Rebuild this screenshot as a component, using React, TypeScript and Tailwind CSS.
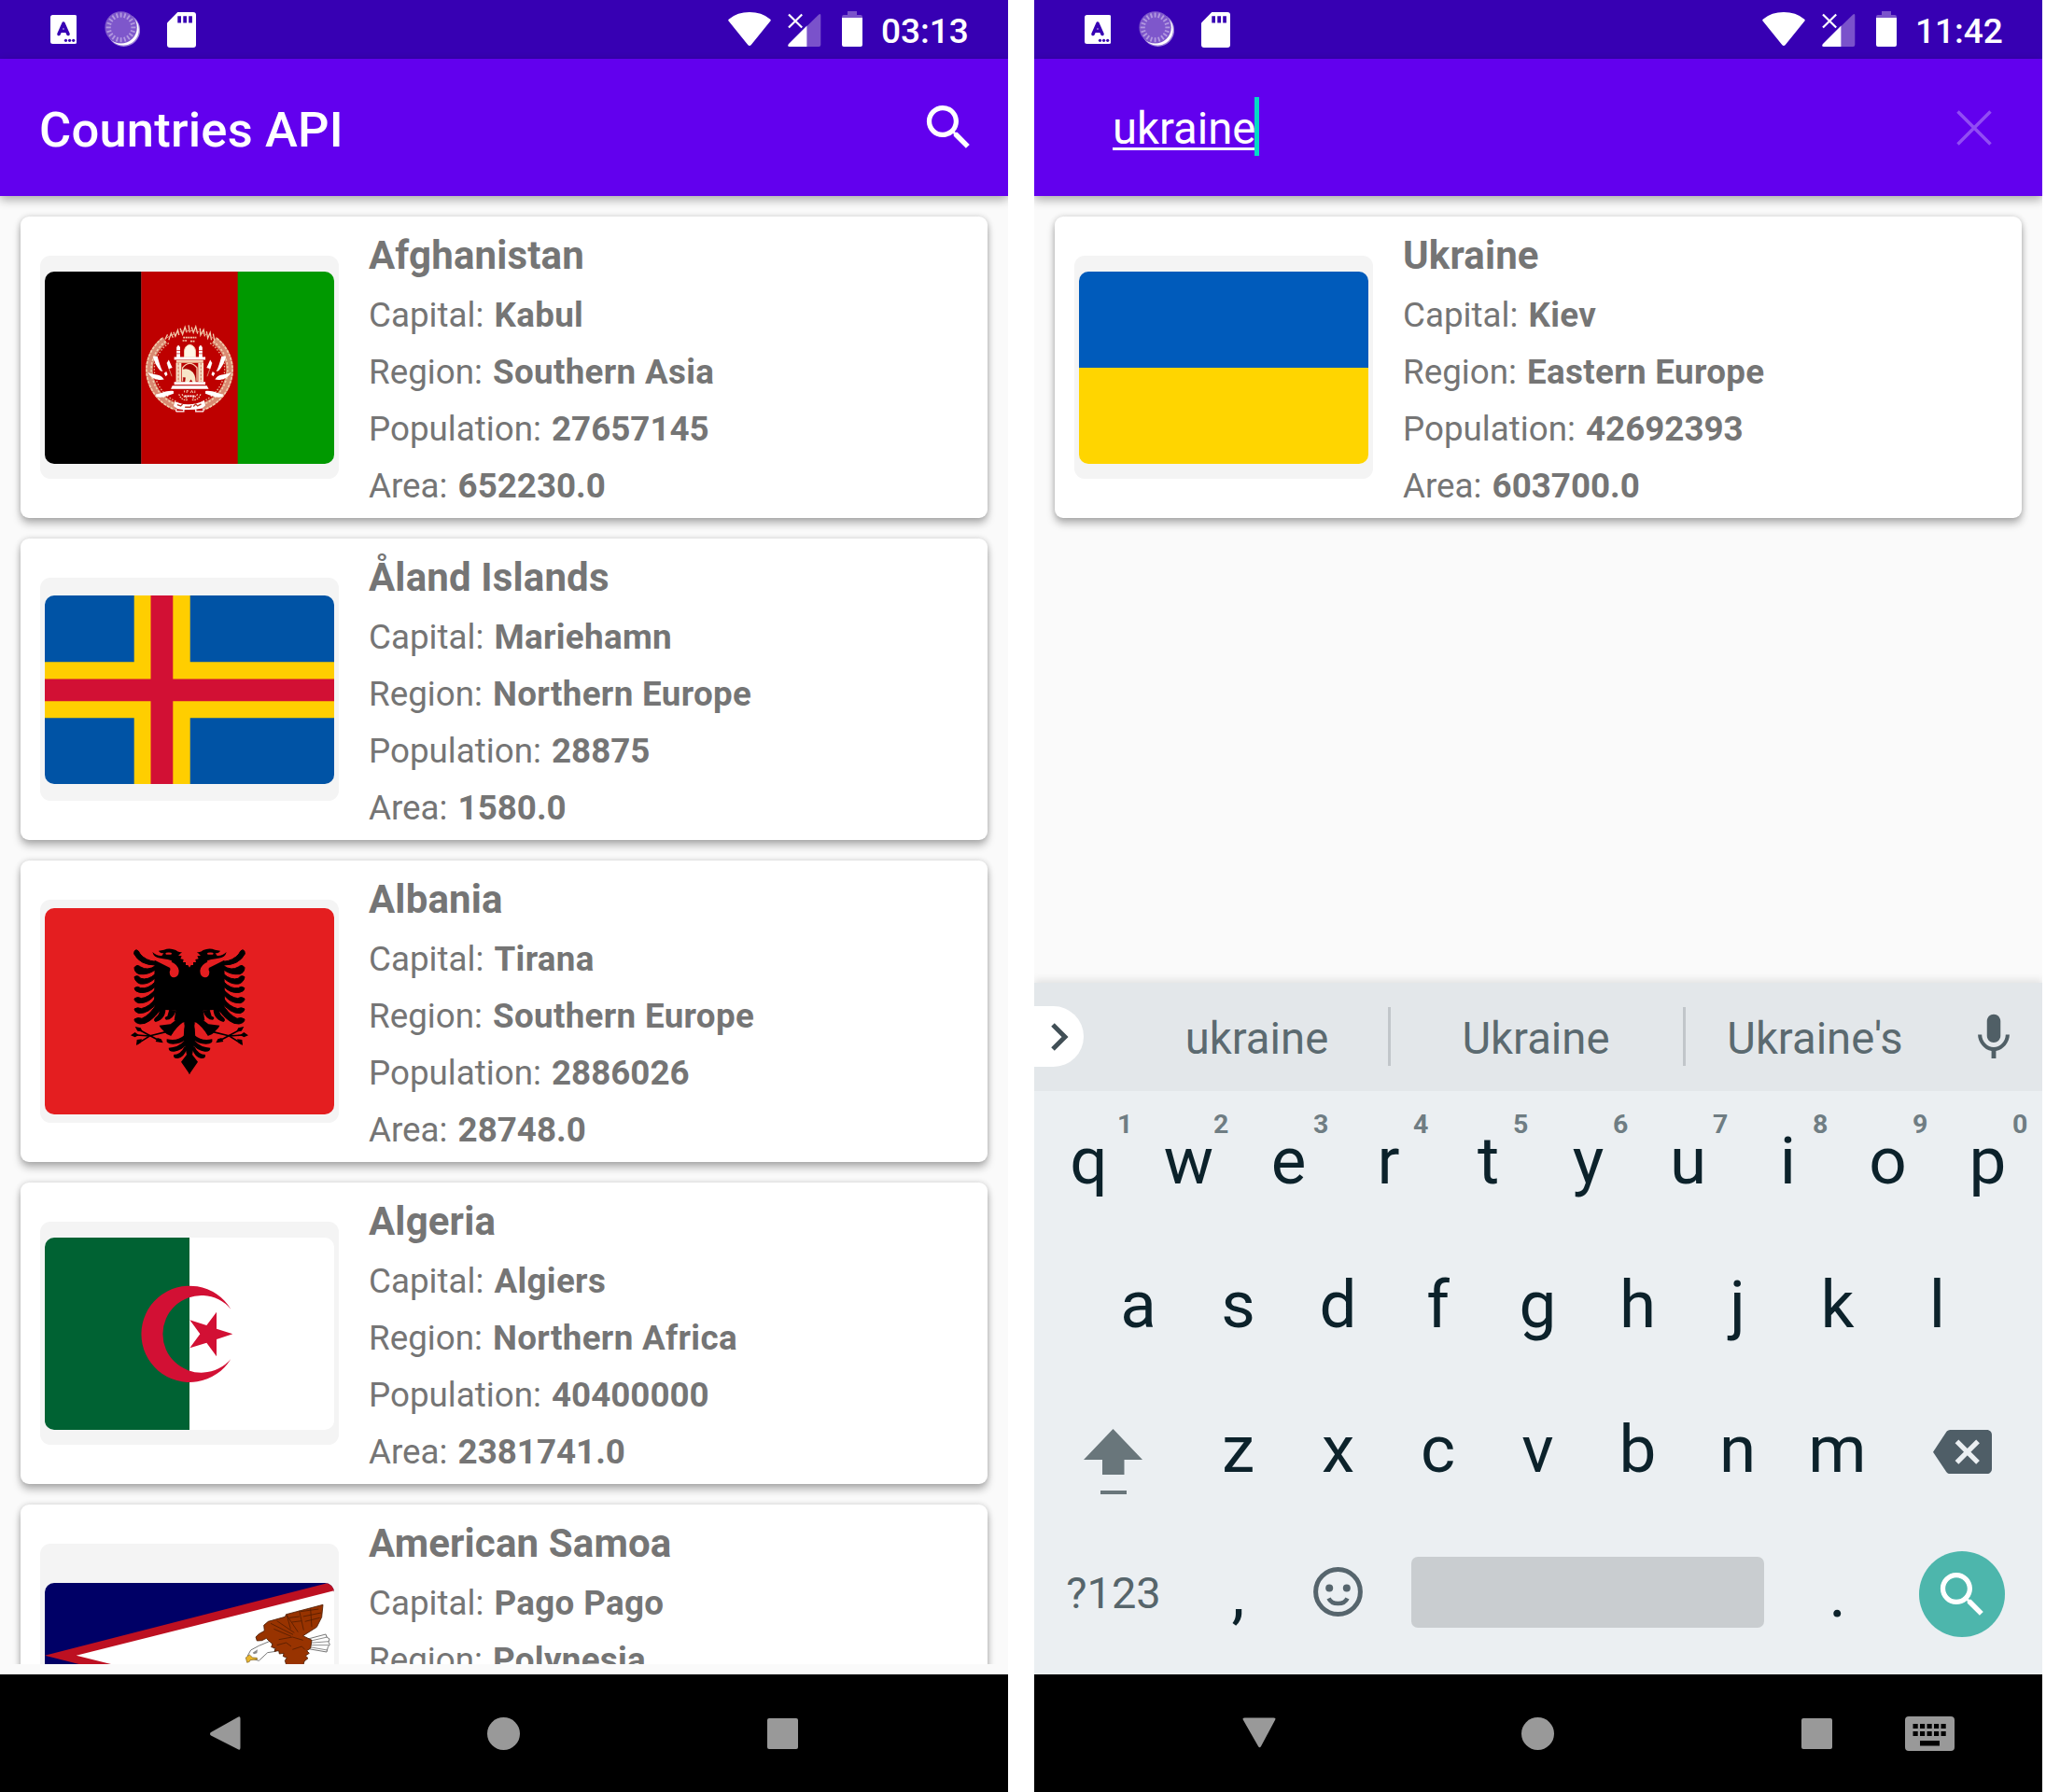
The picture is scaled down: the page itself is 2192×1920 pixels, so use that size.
import type { ReactNode } from "react";

/* ---------- flags ---------- */

function AfghanistanFlag() {
  const wreath = [-1, 1].map((s) => (
    <g key={s} transform={s === 1 ? "translate(438 0) scale(-1 1)" : undefined}>
      <path d="M137 132 C92 165 76 215 90 262 C102 302 132 334 174 348" fill="none" stroke="#d98a72" strokeWidth="24" />
      <path d="M128 126 C82 165 66 215 82 266 C94 306 126 342 170 358" fill="none" stroke="#f3cfae" strokeWidth="5" strokeDasharray="9 4" />
      <path d="M140 136 C98 168 84 215 96 258 C108 298 136 328 176 342" fill="none" stroke="#f3cfae" strokeWidth="5" strokeDasharray="7 5" />
      <path d="M150 142 C108 172 94 215 106 254 C116 290 142 318 180 334" fill="none" stroke="#e9b795" strokeWidth="4" strokeDasharray="5 5" />
      <path d="M97 186 C103 205 112 222 122 232 L130 234 C122 220 118 205 112 184 Z" fill="#fff" />
      <path d="M80 236 C96 246 114 240 128 252 L134 260 C116 264 90 258 80 236 Z" fill="#fff" />
      <path d="M106 308 C124 308 142 294 166 298 L166 306 C148 312 128 322 110 316 Z" fill="#fff" />
      <path d="M144 206 L160 250" stroke="#d98a72" strokeWidth="3" />
      <path d="M144 206 L150 196 L158 214 L162 222 L150 226 Z" fill="#fff" />
      <path d="M134 240 L142 234 L146 244 L140 250 Z" fill="#fff" />
    </g>
  ));
  return (
    <svg viewBox="-246 -87 930 618" className="block h-[206px] w-[310px]">
      <rect x="-246" y="-87" width="311" height="618" fill="#000" />
      <rect x="64" y="-87" width="311" height="618" fill="#be0000" />
      <rect x="374" y="-87" width="310" height="618" fill="#009900" />
      <g transform="translate(219 225) scale(0.965 0.99) translate(-219 -225)">
        {wreath}
        <path d="M138 130 L146 114 M150 132 L158 110 L164 124 M166 106 L172 120 L180 100 L184 116 M188 94 L196 114 L204 90 L210 108 M216 84 L220 108 M226 90 L232 108 L240 88 L246 112 M254 94 L256 116 L266 98 L270 120 M276 104 L280 126 L288 108 L292 132 M298 112 L302 134" fill="none" stroke="#f3cfae" strokeWidth="4" />
        <path d="M142 126 Q220 76 304 130" fill="none" stroke="#e6a58c" strokeWidth="3" strokeDasharray="12 5" />
        <path d="M198 124 H242 M196 134 H212 M222 136 H238" stroke="#f3cfae" strokeWidth="5" strokeDasharray="6 2" />
        <path d="M202 188 V166 Q205 150 220 147 Q236 150 239 166 V188 Z" fill="#fff7e6" stroke="#f3cfae" strokeWidth="3" />
        <path d="M176 190 V156 Q182 142 188 156 V190 Z M250 190 V156 Q256 142 262 156 V190 Z" fill="#fff" />
        <path d="M176 166 H188 M250 166 H262 M176 176 H188 M250 176 H262" stroke="#be0000" strokeWidth="2" />
        <rect x="168" y="187" width="104" height="9" fill="#fff" />
        <rect x="175" y="197" width="90" height="9" fill="#f3cfae" />
        <path d="M174 206 H192 V268 H174 Z M248 206 H266 V268 H248 Z" fill="#f7dfc5" />
        <path d="M182 206 V268 M257 206 V268" stroke="#c96a50" strokeWidth="3" strokeDasharray="8 4" />
        <path d="M196 266 V222 Q220 194 244 222 V266" fill="#a80000" stroke="#f3cfae" strokeWidth="4" />
        <path d="M194 228 Q210 222 222 230 Q240 240 240 270 L232 272 L224 260 L214 274 L204 268 L206 254 L194 252 Z" fill="#f7e6c8" />
        <rect x="168" y="268" width="104" height="9" fill="#fff" />
        <path d="M162 280 H277 L283 291 H157 Z" fill="#fff" />
        <path d="M202 302 V296 M210 304 V296 L216 298 M222 304 L227 296 L231 304 M237 296 V304" stroke="#f3cfae" strokeWidth="3" fill="none" />
        <path d="M184 308 Q192 330 214 326 M256 308 Q248 330 226 326 M194 308 Q202 320 214 320 M246 308 Q238 320 226 320" stroke="#f3cfae" strokeWidth="4" strokeDasharray="5 3" fill="none" />
        <path d="M202 314 H238" stroke="#fff" strokeWidth="5" strokeDasharray="7 2" />
        <path d="M170 332 Q220 352 268 328 L272 344 L262 354 Q220 362 180 356 L166 346 Z" fill="#fff" />
        <path d="M176 354 Q170 366 182 364 L200 364 L200 356 M264 354 Q270 366 258 364 L240 364 L240 356" stroke="#fff" strokeWidth="4" fill="none" />
        <path d="M178 342 L190 346 L196 340 M204 350 H222 L226 344 M232 348 L240 340 L246 346 L258 340" stroke="#be3a2a" strokeWidth="4" fill="none" />
      </g>
    </svg>
  );
}

function AlandFlag() {
  return (
    <svg viewBox="0 0 310 202" className="block h-[202px] w-[310px]">
      <rect width="310" height="202" fill="#0053a5" />
      <path d="M95.7 0H155.7V202H95.7Z M0 71.3H310V131.2H0Z" fill="#ffce00" />
      <path d="M113.5 0H137.3V202H113.5Z M0 89.4H310V113.2H0Z" fill="#d21034" />
    </svg>
  );
}

function AlbaniaFlag() {
  const half = (
    <>
      {/* neck, breast and tail */}
      <path d="M610 412 L604 402 L597 402 L597 393 L588 393 L590 384 L580 382 L584 373 L573 372 L585 360 Q572 362 565 354 Q545 345 527 353 L510 356 Q514 364 526 364 L520 372 Q505 374 490 360 Q494 378 516 380 Q545 384 552 388 L548 412 L497 386 L495 530 L520 545 L565 548 L560 580 L582 583 Q592 585 592 600 L590 640 L600 690 L582 713 L610 754 Z" />
      {/* wing feathers */}
      <g stroke="#000" strokeWidth="3" strokeLinejoin="round">
        <path d="M431 366 Q430 355 438 353 Q446 355 450 366 Q468 388 500 391 V402 Q450 402 431 366 Z" />
        <path d="M432 410 Q440 398 452 408 Q474 422 500 404 V416 Q478 434 448 431 Q432 426 432 410 Z" />
        <path d="M432 440 Q444 432 452 445 Q476 452 500 430 V442 Q478 466 450 462 Q434 456 432 440 Z" />
        <path d="M432 476 Q442 468 452 476 Q476 480 500 455 V470 Q478 494 448 490 Q432 486 432 476 Z" />
        <path d="M432 510 Q442 502 454 509 Q478 506 500 480 V496 Q478 526 446 524 Q432 520 432 510 Z" />
        <path d="M432 543 Q442 536 454 542 Q482 536 500 508 L506 520 Q480 558 446 557 Q432 552 432 543 Z" />
        <path d="M432 576 Q442 568 456 574 Q486 560 504 524 L518 542 Q480 594 450 591 Q432 588 432 576 Z" />
      </g>
      <path d="M514 535 H532 Q536 575 500 585 Q490 580 500 570 Q514 562 514 535 Z" />
      <path d="M544 545 L566 548 Q556 578 534 578 Q524 570 538 566 Z" />
      {/* leg and claws */}
      <path d="M570 575 L592 583 Q570 600 550 630 L536 624 L516 604 L512 596 L548 592 Z" />
      <path d="M536 616 L480 630 L440 627 M440 606 L480 628 L518 648 M440 656 L484 628" fill="none" stroke="#000" strokeWidth="5" />
      <path d="M420 628 L434 618 L446 627 L434 634 Z M434 600 L452 604 L458 616 L442 614 Z M438 660 L440 642 L456 640 L452 652 Z M524 652 L500 648 L506 636 L518 640 Z" />
      {/* tail feathers */}
      <path d="M592 628 Q570 648 536 640 Q532 656 556 656 Q580 656 596 642 Z" />
      <path d="M592 646 Q572 668 542 668 Q542 682 560 680 Q584 678 598 658 Z" />
      <path d="M594 662 Q580 690 558 690 Q556 704 572 702 Q592 698 600 672 Z" />
      <path d="M505 388 Q535 402 546 408 Q549 416 545 424 Q545 442 560 442 Q575 440 575 420 Q572 400 548 391 Q520 382 500 384 Z" fill="#e41e20" />
      <ellipse cx="542" cy="365" rx="10" ry="3.5" fill="#e41e20" />
      <path d="M592 590 Q596 606 582 618 Q568 632 550 630 Q566 600 592 585 Z" fill="#e41e20" />
    </>
  );
  return (
    <svg viewBox="144 219 930 663" className="block h-[221px] w-[310px]">
      <rect x="144" y="219" width="930" height="663" fill="#e41e20" />
      <g>{half}</g>
      <g transform="translate(1218 0) scale(-1 1)">{half}</g>
    </svg>
  );
}

function AlgeriaFlag() {
  return (
    <svg viewBox="144 198 930 618" className="block h-[206px] w-[310px]">
      <rect x="144" y="198" width="930" height="618" fill="#fff" />
      <rect x="144" y="198" width="465" height="618" fill="#006233" />
      <path d="M742 428 A155 155 0 1 0 742 588 A124 124 0 1 1 742 428 Z" fill="#d21034" />
      <path d="M748 508 L696 491 V437 L664 480 L610 463 L643 508 L610 553 L664 536 L696 580 V525 Z" fill="#d21034" />
    </svg>
  );
}

function SamoaFlag() {
  return (
    <svg viewBox="54 48 930 465" className="block h-[155px] w-[310px]">
      <rect x="54" y="48" width="930" height="465" fill="#000066" />
      <path d="M54 281 L984 43 V519 Z" fill="#bd1021" />
      <path d="M155 281 L984 73 V489 Z" fill="#fff" />
      <path d="M900 228 L957 213 L960 222 L969 228 L966 238 L970 246 L964 254 L960 270 L902 260 Z" fill="#fff" stroke="#777" strokeWidth="3" />
      <path d="M905 235 L962 222 M905 241 L967 236 M905 248 L967 248 M905 254 L962 264" stroke="#777" strokeWidth="2.5" />
      <path d="M780 234 L742 250 L716 264 L706 282 L722 292 L742 298 L770 272 L796 268 Z" fill="#fff" stroke="#777" strokeWidth="3" />
      <path d="M712 279 L700 288 L704 304 L712 301 L714 296 L736 294 L736 289 L722 288 Z" fill="#e9b62d" stroke="#7a5a1a" strokeWidth="2" />
      <path d="M722 272 L738 262 L736 274 L726 277 Z" fill="#8a8a8a" />
      <path d="M948 118 L830 149 L826 157 L772 172 L758 184 L760 202 L742 212 L732 222 L736 234 L752 233 L766 226 L778 238 L786 244 L782 254 L796 258 L792 268 L806 266 L808 276 L822 274 L820 284 L832 288 L826 298 L836 330 H880 L888 300 L900 290 L892 282 L904 274 L896 266 L908 258 L912 232 L884 218 L928 190 L944 158 Z" fill="#983300" stroke="#4a1a00" strokeWidth="2.5" />
      <path d="M830 149 L868 206 M872 137 L886 200 M908 130 L912 190 M780 178 L852 214 M800 170 L856 208 M832 152 L844 196 M790 196 L846 220 M876 140 L934 132 M884 156 L942 144 M890 172 L938 160 M840 160 L872 156 M848 174 L880 170 M806 230 L850 222 L884 232 M800 248 L830 240 L846 252 M850 262 L880 252 L890 262" fill="none" stroke="#541d00" strokeWidth="2.5" />
    </svg>
  );
}

function UkraineFlag() {
  return (
    <div className="flex h-[206px] w-[310px] flex-col">
      <div className="flex-1 bg-[#005bbb]" />
      <div className="flex-1 bg-[#ffd500]" />
    </div>
  );
}

/* ---------- system bars ---------- */

function StatusBar({ time }: { time: string }) {
  const ticks = Array.from({ length: 20 }, (_, i) => i * 18);
  return (
    <div className="flex h-[63px] shrink-0 bg-[#3700b3] pl-[54px]">
      <svg viewBox="0 0 28 31" className="mt-4 h-[31px] w-7">
        <rect width="28.5" height="31" rx="2.5" fill="#fff" />
        <path d="M9 20.5 L14 9.2 L19 20.5 M10.8 17.3 H17.2" fill="none" stroke="#3700b3" strokeWidth="3.6" strokeLinecap="round" strokeLinejoin="round" />
        <circle cx="16.5" cy="27.3" r="1.6" fill="#3700b3" />
        <circle cx="20.6" cy="27.3" r="1.6" fill="#3700b3" />
        <circle cx="24.7" cy="27.3" r="1.6" fill="#3700b3" />
      </svg>
      <svg viewBox="112 12 38 39" className="ml-[30px] mt-3 h-[39px] w-[38px]">
        <circle cx="132.5" cy="32.3" r="17.6" fill="#9d82da" />
        <circle cx="132" cy="31.8" r="16.8" fill="#fff" />
        <circle cx="129.6" cy="29.4" r="17.2" fill="#7e57cb" />
        {ticks.map((a) => (
          <path key={a} d="M129.6 13.6 V18.6" stroke="#b39ae0" strokeWidth="1.8" transform={`rotate(${a} 129.6 29.4)`} />
        ))}
      </svg>
      <svg viewBox="0 0 31 38" className="ml-[29px] mt-[12.5px] h-[38px] w-[31px]">
        <path d="M11.3 0 H28 Q31 0 31 3 V35 Q31 38 28 38 H3 Q0 38 0 35 V11.5 Z" fill="#fff" />
        <path d="M11.3 4.2H15V11.5H11.3Z M17.3 4.2H21V11.5H17.3Z M23.2 4.2H26.9V11.5H23.2Z" fill="#3700b3" />
      </svg>
      <svg viewBox="0 0 46 36" className="ml-[570px] mt-[13px] h-9 w-[46px]">
        <path d="M23 36 Q22 36 21.2 35 L0.6 9.6 Q-0.3 8.4 1 7.4 Q10 0 23 0 Q36 0 45 7.4 Q46.3 8.4 45.4 9.6 L24.8 35 Q24 36 23 36 Z" fill="#fff" />
      </svg>
      <svg viewBox="0 0 36 36" className="ml-[17.5px] mt-3.5 h-9 w-9">
        <path d="M35.3 2.6 Q35.3 0 33.3 1.6 L20.5 14 V36 H33.3 Q35.3 36 35.3 34 Z" fill="#7a52cb" />
        <path d="M20.5 13.4 L1 33 Q-1 36 2 36 H20.5 Z" fill="#fff" />
        <path d="M1 1.5 L15.2 15.5 M15.2 1.5 L1 15.5" stroke="#fff" strokeWidth="2.2" />
      </svg>
      <svg viewBox="0 0 22 38" className="ml-[22.5px] mt-3 h-[38px] w-[22px]">
        <path d="M6 0H16V4H20Q22 4 22 6V7H0V6Q0 4 2 4H6Z" fill="#7a52cb" />
        <path d="M0 7H22V36Q22 38 20 38H2Q0 38 0 36Z" fill="#fff" />
      </svg>
      <span className="ml-5 text-[37px] font-medium leading-[67px] text-white">{time}</span>
    </div>
  );
}

function AppBar({ children }: { children: ReactNode }) {
  return (
    <div className="relative z-10 flex h-[147px] shrink-0 items-center bg-[#6200ee] shadow-[0_4px_10px_rgba(0,0,0,0.32)]">
      {children}
    </div>
  );
}

function NavBar({ keyboardOpen }: { keyboardOpen: boolean }) {
  return (
    <div className="flex h-[126px] shrink-0 items-center bg-black pl-[211px] text-[#999999]">
      <svg viewBox="0 0 60 60" className="size-[60px]" fill="currentColor">
        {keyboardOpen ? (
          <path d="M14.5 13.5 H45.5 Q48.5 13.5 47 16 L32 44 Q30.5 46.5 29 44 L13 16 Q11.5 13.5 14.5 13.5 Z" />
        ) : (
          <path d="M46.5 14.5 V45.5 Q46.5 49 43.5 47 L15 32.5 Q13 30.5 15 29 L43.5 13 Q46.5 11 46.5 14.5 Z" />
        )}
      </svg>
      <div className="ml-[251px] size-[35px] rounded-full bg-[#999999]" />
      <div className="ml-[265px] size-[33px] rounded-[2px] bg-[#999999]" />
      {keyboardOpen && (
        <svg viewBox="0 0 53 37" className="ml-[78px] h-[37px] w-[53px]">
          <rect width="53" height="37" rx="4" fill="#999" />
          {[8.5, 16, 23.5, 31, 38.5].map((x) => (
            <path key={x} d={`M${x} 8h5.2v5h-5.2zM${x} 16h5.2v5h-5.2z`} fill="#000" />
          ))}
          <rect x="16" y="26" width="21" height="5.5" fill="#000" />
        </svg>
      )}
    </div>
  );
}

/* ---------- countries ---------- */

type Country = {
  name: string;
  capital: string;
  region: string;
  population?: string;
  area?: string;
  flag: ReactNode;
};

const countries: Country[] = [
  { name: "Afghanistan", capital: "Kabul", region: "Southern Asia", population: "27657145", area: "652230.0", flag: <AfghanistanFlag /> },
  { name: "Åland Islands", capital: "Mariehamn", region: "Northern Europe", population: "28875", area: "1580.0", flag: <AlandFlag /> },
  { name: "Albania", capital: "Tirana", region: "Southern Europe", population: "2886026", area: "28748.0", flag: <AlbaniaFlag /> },
  { name: "Algeria", capital: "Algiers", region: "Northern Africa", population: "40400000", area: "2381741.0", flag: <AlgeriaFlag /> },
  { name: "American Samoa", capital: "Pago Pago", region: "Polynesia", flag: <SamoaFlag /> },
];

const ukraine: Country = {
  name: "Ukraine",
  capital: "Kiev",
  region: "Eastern Europe",
  population: "42692393",
  area: "603700.0",
  flag: <UkraineFlag />,
};

function Field({ label, value, numeric }: { label: string; value: string; numeric?: boolean }) {
  return (
    <p className="h-[61px] text-[36.75px] leading-[61px]">
      {label}:{" "}
      <span className={numeric ? "ml-[2px] font-bold" : "ml-[2px] font-bold tracking-[0.33px]"}>{value}</span>
    </p>
  );
}

function CountryCard({ country }: { country: Country }) {
  return (
    <article className="flex h-[323px] shrink-0 rounded-[9px] bg-white pl-[21px] text-[#757575] shadow-[0_6px_9px_rgba(0,0,0,0.27),0_0_6px_rgba(0,0,0,0.16)]">
      <div className="mt-[42px] flex h-[239px] w-[320px] items-center justify-center rounded-[11px] bg-[#f4f4f4]">
        <div className="overflow-hidden rounded-[10px]">{country.flag}</div>
      </div>
      <div className="ml-8 pt-[11px]">
        <h2 className="h-[64px] text-[42px] font-bold leading-[61px] tracking-[0.15px]">{country.name}</h2>
        <Field label="Capital" value={country.capital} />
        <Field label="Region" value={country.region} />
        {country.population && <Field label="Population" value={country.population} numeric />}
        {country.area && <Field label="Area" value={country.area} numeric />}
      </div>
    </article>
  );
}

function SearchIcon() {
  return (
    <svg viewBox="0 0 24 24" className="size-[63px]" fill="#fff">
      <path d="M15.5 14h-.79l-.28-.27C15.41 12.59 16 11.11 16 9.5 16 5.91 13.09 3 9.5 3S3 5.91 3 9.5 5.91 16 9.5 16c1.61 0 3.09-.59 4.23-1.57l.27.28v.79l5 4.99L20.49 19l-4.99-5zm-6 0C7.01 14 5 11.99 5 9.5S7.01 5 9.5 5 14 7.01 14 9.5 11.99 14 9.5 14z" />
    </svg>
  );
}

/* ---------- keyboard ---------- */

function Key({ char, hint }: { char: string; hint?: string }) {
  return (
    <div className="relative w-[107px] text-center">
      {char}
      {hint && (
        <span
          className={
            hint === "1"
              ? "absolute left-[84px] top-[17px] text-[28.5px] font-bold leading-[38px] text-[#6f7d83]"
              : "absolute left-[80px] top-[17px] text-[28.5px] font-bold leading-[38px] text-[#6f7d83]"
          }
        >
          {hint}
        </span>
      )}
    </div>
  );
}

function Keyboard() {
  return (
    <div className="relative shrink-0 bg-[#ebeff2] shadow-[0_-3px_8px_rgba(0,0,0,0.1)]">
      <div className="flex h-[116px] items-start bg-[#e3e7ea] text-[47.25px] leading-[56px] text-[#5b6a70]">
        <div className="mt-[25px] flex h-[65px] w-[53px] items-center rounded-r-[33px] bg-white pl-[17px]">
          <svg viewBox="0 0 21 32" className="h-8 w-[21px]">
            <path d="M3 3 L16 16 L3 29" fill="none" stroke="#414f56" strokeWidth="5" />
          </svg>
        </div>
        <div className="mt-8 w-[326px] pl-[46px] pr-[1px] text-center">ukraine</div>
        <div className="mt-[26px] h-[63px] w-[3px] bg-[#c1c6ca]" />
        <div className="mt-8 w-[313px] pr-[2px] text-center">Ukraine</div>
        <div className="mt-[26px] h-[63px] w-[3px] bg-[#c1c6ca]" />
        <div className="mt-8 w-[277px] text-center">Ukraine's</div>
        <svg viewBox="0 0 24 24" className="ml-6 mt-[29px] size-[58px]" fill="#505f66">
          <path d="M12 14.5c1.66 0 3-1.34 3-3V5c0-1.66-1.34-3-3-3S9 3.34 9 5v6.5c0 1.66 1.34 3 3 3zM17.3 11c0 3-2.54 5.6-5.3 5.6S6.7 14 6.7 11H5c0 3.41 2.72 6.73 6 7.22V21.5h2v-3.28c3.28-.48 6-3.8 6-7.22h-1.7z" />
        </svg>
      </div>

      <div className="text-[71px] text-[#0c222b]">
        <div className="flex h-[151px] pl-[5px] leading-[149px]">
          {"qwertyuiop".split("").map((c, i) => (
            <Key key={c} char={c} hint={String((i + 1) % 10)} />
          ))}
        </div>
        <div className="flex h-[155px] pl-[58px] leading-[155px]">
          {"asdfghjkl".split("").map((c) => (
            <Key key={c} char={c} />
          ))}
        </div>
        <div className="flex h-[155px] pl-[5px] leading-[155px]">
          <svg viewBox="0 0 160 155" className="h-[155px] w-40" fill="#69767b">
            <path d="M79.5 56 L111 89 H91.5 V105 H68 V89 H48 Z" />
            <rect x="66" y="122" width="28" height="4" />
          </svg>
          {"zxcvbnm".split("").map((c) => (
            <Key key={c} char={c} />
          ))}
          <svg viewBox="0 0 24 18" className="ml-[48.5px] mt-[57px] h-[47.25px] w-[63px]">
            <path d="M22 0H7c-.69 0-1.23.35-1.59.88L0 9l5.41 8.11c.36.53.9.89 1.59.89h15c1.1 0 2-.9 2-2V2c0-1.1-.9-2-2-2z" fill="#4f5e67" />
            <path d="M9.7 4.7 L18.3 13.3 M18.3 4.7 L9.7 13.3" stroke="#ebeff2" strokeWidth="2" />
          </svg>
        </div>
        <div className="flex h-[164px] pl-[5px] leading-[155px]">
          <div className="w-40 text-center text-[47px] leading-[154px] text-[#56656b]">?123</div>
          <Key char="," />
          <svg viewBox="0 0 107 155" className="h-[155px] w-[107px]">
            <circle cx="53.5" cy="75.5" r="23.9" fill="none" stroke="#56656d" strokeWidth="5" />
            <circle cx="44.2" cy="71.5" r="4" fill="#56656d" />
            <circle cx="62.8" cy="71.5" r="4" fill="#56656d" />
            <path d="M43.5 82.5 Q46 88 53.5 88 Q61 88 63.5 82.5" fill="none" stroke="#56656d" strokeWidth="4.5" />
          </svg>
          <div className="mx-[25px] mt-[38px] h-[76px] w-[378px] rounded-[7px] bg-[#c9cdd0]" />
          <Key char="." />
          <div className="ml-[34px] mt-8 flex size-[92px] items-center justify-center rounded-full bg-[#4db6ac]">
            <SearchIcon />
          </div>
        </div>
      </div>
    </div>
  );
}

/* ---------- screens ---------- */

export default function App() {
  return (
    <div className="flex h-[1920px] w-[2192px] gap-7 overflow-hidden bg-white font-['Roboto',sans-serif]">
      <section className="flex w-[1080px] shrink-0 flex-col overflow-hidden bg-[#fafafa]">
        <StatusBar time="03:13" />
        <AppBar>
          <h1 className="ml-[42px] pt-[5px] text-[52.5px] font-medium leading-none tracking-[0.2px] text-white">Countries API</h1>
          <div className="ml-auto mr-8">
            <SearchIcon />
          </div>
        </AppBar>
        <main className="mb-[11px] flex h-[1573px] flex-col gap-[22px] overflow-hidden px-[22px] pt-[22px]">
          {countries.map((c) => (
            <CountryCard key={c.name} country={c} />
          ))}
        </main>
        <NavBar keyboardOpen={false} />
      </section>

      <section className="flex w-[1080px] shrink-0 flex-col overflow-hidden bg-[#fafafa]">
        <StatusBar time="11:42" />
        <AppBar>
          <div className="mb-[2px] ml-[84px] flex h-[63px] items-start">
            <span className="text-[47.25px] leading-[68px] text-white underline decoration-[3px] underline-offset-[4px]">ukraine</span>
            <div className="-ml-[1.5px] h-[63px] w-[5.5px] bg-[#03dac5]" />
          </div>
          <svg viewBox="0 0 38 38" className="ml-auto mr-[54px] size-[38px]">
            <path d="M1.5 1.5 L36.5 36.5 M36.5 1.5 L1.5 36.5" stroke="#914df3" strokeWidth="3.5" />
          </svg>
        </AppBar>
        <main className="flex h-[843px] shrink-0 flex-col px-[22px] pt-[22px]">
          <CountryCard country={ukraine} />
        </main>
        <Keyboard />
        <NavBar keyboardOpen />
      </section>
    </div>
  );
}
